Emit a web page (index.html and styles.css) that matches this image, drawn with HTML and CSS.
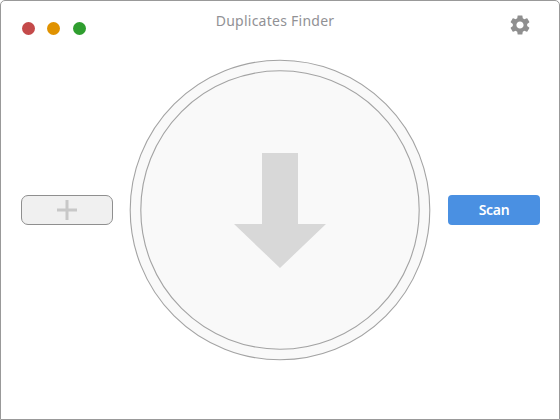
FILE: index.html
```html
<!DOCTYPE html>
<html lang="en">
<head>
    <meta charset="UTF-8">
    <title>Duplicates Finder</title>
    <link rel="stylesheet" href="styles.css">
</head>
<body>
    <div class="window">
        <div class="titlebar">
            <div class="traffic-lights">
                <span class="light red"></span>
                <span class="light orange"></span>
                <span class="light green"></span>
            </div>
            <div class="title">Duplicates Finder</div>
            <svg class="gear" viewBox="2 2 20 20" aria-label="Settings">
                <path d="M19.14 12.94c.04-.3.06-.61.06-.94 0-.32-.02-.64-.07-.94l2.03-1.58c.18-.14.23-.41.12-.61l-1.92-3.32c-.12-.22-.37-.29-.59-.22l-2.39.96c-.5-.38-1.03-.7-1.62-.94l-.36-2.54c-.04-.24-.24-.41-.48-.41h-3.84c-.24 0-.43.17-.47.41l-.36 2.54c-.59.24-1.13.57-1.62.94l-2.39-.96c-.22-.08-.47 0-.59.22L2.74 8.87c-.12.21-.08.47.12.61l2.03 1.58c-.05.3-.09.63-.09.94s.02.64.07.94l-2.03 1.58c-.18.14-.23.41-.12.61l1.92 3.32c.12.22.37.29.59.22l2.39-.96c.5.38 1.03.7 1.62.94l.36 2.54c.05.24.24.41.48.41h3.84c.24 0 .44-.17.47-.41l.36-2.54c.59-.24 1.13-.56 1.62-.94l2.39.96c.22.08.47 0 .59-.22l1.92-3.32c.12-.22.07-.47-.12-.61l-2.01-1.58zM12 15.6c-1.98 0-3.6-1.62-3.6-3.6s1.62-3.6 3.6-3.6 3.6 1.62 3.6 3.6-1.62 3.6-3.6 3.6z"/>
            </svg>
        </div>

        <div class="main">
            <button class="add-btn" aria-label="Add">
                <svg class="plus" viewBox="0 0 20 20">
                    <path d="M8.5 0h3v8.5H20v3h-8.5V20h-3v-8.5H0v-3h8.5z"/>
                </svg>
            </button>

            <!-- Drop zone -->
            <svg class="drop-zone" viewBox="0 0 302 302">
                <circle class="ring" cx="151" cy="151" r="149.8"/>
                <circle class="ring" cx="151" cy="151" r="139.2"/>
                <polygon class="arrow" points="133,94 169,94 169,165 197,165 151,209 105,165 133,165"/>
            </svg>

            <button class="scan-btn">Scan</button>
        </div>
    </div>
</body>
</html>
```

FILE: styles.css
```css
html, body {
    margin: 0;
    padding: 0;
}
body {
    width: 560px;
    height: 420px;
    background: #fff;
    overflow: hidden;
}
.window {
    box-sizing: border-box;
    width: 560px;
    height: 420px;
    background: #fff;
    border: 1px solid #999;
    border-radius: 5px 5px 0 0;
}
.titlebar {
    display: grid;
    grid-template-columns: 1fr auto 1fr;
    height: 58px;
    padding-left: 21px;
    padding-right: 29px;
}
.traffic-lights {
    display: flex;
    gap: 12px;
    padding-top: 21px;
}
.light {
    width: 13px;
    height: 13px;
    border-radius: 50%;
}
.red {
    background: #c44a4a;
}
.orange {
    background: #e09200;
}
.green {
    margin-left: 1px;
    background: #2f9e2f;
}
.title {
    padding-top: 10px;
    padding-right: 2px;
    font-family: "Noto Sans", sans-serif;
    font-size: 14px;
    letter-spacing: 0.25px;
    line-height: 20px;
    color: #919195;
}
.gear {
    justify-self: end;
    width: 20px;
    height: 20px;
    margin-top: 14px;
    fill: #8f8f8f;
}
.main {
    display: flex;
    align-items: center;
    height: 302px;
    padding-left: 20px;
}
.add-btn {
    width: 92px;
    height: 30px;
    padding: 0;
    display: flex;
    align-items: center;
    justify-content: center;
    background: #f0f0f0;
    border: 1px solid #8f8f8f;
    border-radius: 7px;
}
.plus {
    width: 20px;
    height: 20px;
    fill: #c8c8c8;
}
.drop-zone {
    width: 302px;
    height: 302px;
    margin-left: 16px;
    margin-right: 17px;
}
.ring {
    fill: #f9f9f9;
    stroke: #a3a3a3;
    stroke-width: 1.1;
}
.arrow {
    fill: #d8d8d8;
}
.scan-btn {
    width: 92px;
    height: 30px;
    padding: 0 0 2px;
    background: #4a90e2;
    border: none;
    border-radius: 4px;
    color: #fff;
    font-family: "Noto Sans", sans-serif;
    font-size: 14px;
    font-weight: 600;
    letter-spacing: -0.3px;
}
```
